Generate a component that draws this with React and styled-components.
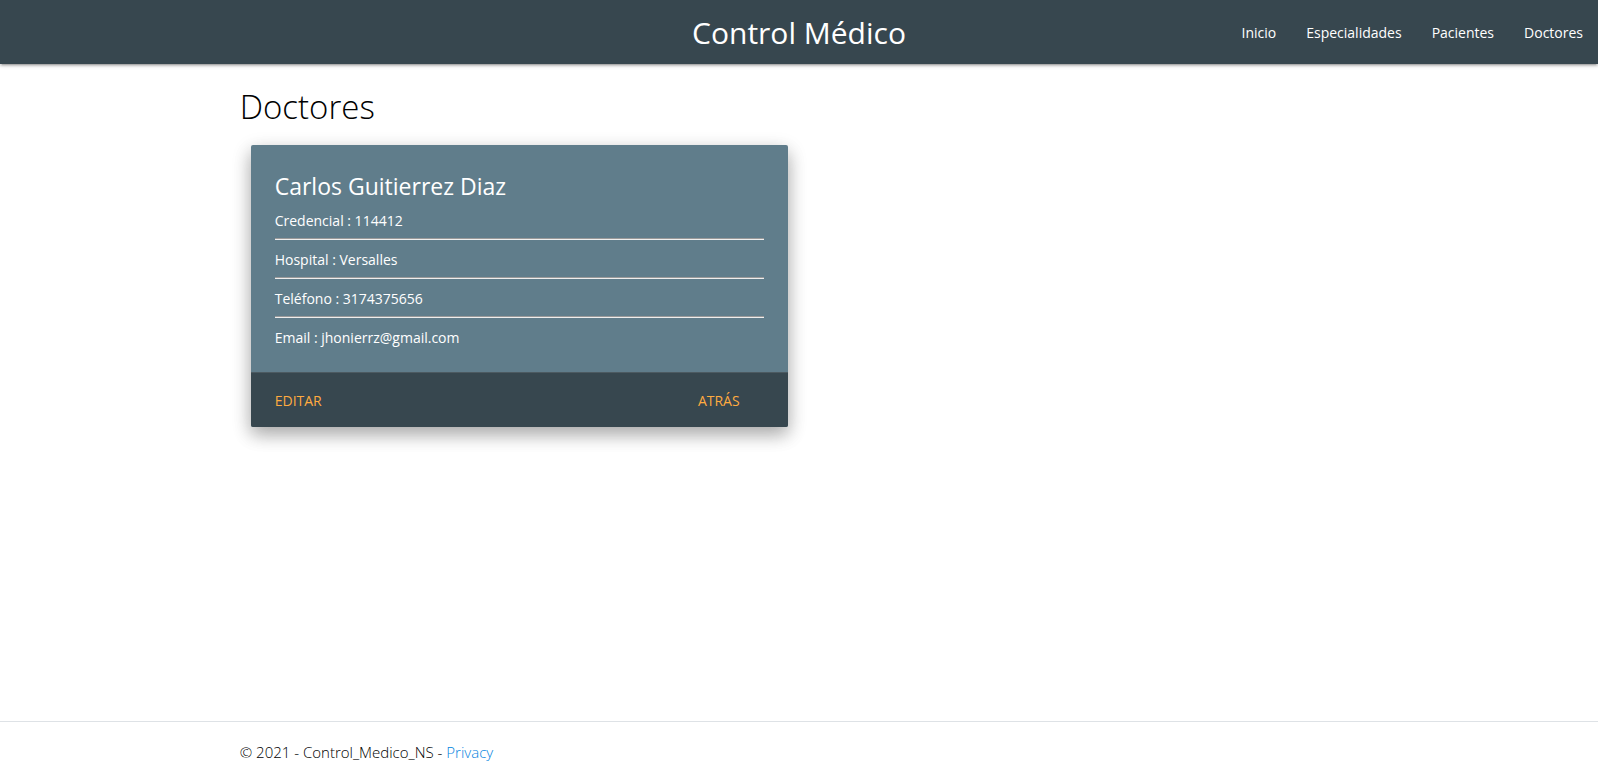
import React from "react";
import styled, { createGlobalStyle } from "styled-components";

const Global = createGlobalStyle`
  *, *::before, *::after { box-sizing: border-box; }
  html { font-family: "Open Sans", "Noto Sans", sans-serif; font-size: 14px; line-height: 23px; }
  body { margin: 0; color: #000; background: #fff; }
  a { text-decoration: none; }
`;

const Page = styled.div`
  display: flex;
  flex-direction: column;
  min-height: 100vh;
`;

const NavBar = styled.nav`
  display: grid;
  grid-template-columns: 1fr auto 1fr;
  align-items: center;
  height: 64px;
  padding-top: 2px;
  background: #37474f;
  box-shadow: 0 2px 2px 0 rgba(0, 0, 0, 0.14), 0 3px 1px -2px rgba(0, 0, 0, 0.12), 0 1px 5px 0 rgba(0, 0, 0, 0.2);
`;

const Brand = styled.a`
  grid-column: 2;
  color: #fff;
  font-size: 30px;
  line-height: 62px;
`;

const NavList = styled.ul`
  display: flex;
  justify-content: flex-end;
  margin: 0;
  padding: 0;
  list-style: none;
`;

const NavLink = styled.a`
  display: block;
  padding: 0 15px;
  color: #fff;
  line-height: 62px;
`;

const Main = styled.main`
  flex: 1;
  width: 70%;
  margin: 0 auto;
`;

const Title = styled.h1`
  margin: 24px 0 19px;
  font-size: 33px;
  font-weight: 300;
  line-height: 38px;
`;

const Card = styled.article`
  width: 48%;
  margin-left: 11px;
  border-radius: 2px;
  overflow: hidden;
  color: #fff;
  background: #607d8b;
  box-shadow: 0 8px 17px 0 rgba(0, 0, 0, 0.2), 0 6px 20px 0 rgba(0, 0, 0, 0.19);
`;

const CardContent = styled.div`
  padding: 24px 24px 23px;
`;

const CardTitle = styled.h2`
  margin: 0 0 6px;
  font-size: 23px;
  font-weight: 400;
  line-height: 34px;
`;

const Detail = styled.p`
  margin: 0;
`;

const Divider = styled.hr`
  margin: 6px 0 8px;
  border: 0;
  border-top: 1px solid #9a9a9a;
  border-bottom: 1px solid #eee;
`;

const CardActions = styled.div`
  display: flex;
  justify-content: space-between;
  padding: 16px 48px 15px 24px;
  border-top: 1px solid #4c5a61;
  background: #37474f;
`;

const ActionLink = styled.a`
  color: #ffab40;
  text-transform: uppercase;
`;

const Footer = styled.footer`
  border-top: 1px solid #dee2e6;
  line-height: 60px;
`;

const FooterText = styled.div`
  width: 70%;
  margin: 0 auto;
  font-size: 15px;
  font-weight: 300;
`;

const FooterLink = styled.a`
  color: #0284e0;
`;

const sections = ["Inicio", "Especialidades", "Pacientes", "Doctores"];

const details = [
  ["Credencial", "114412"],
  ["Hospital", "Versalles"],
  ["Teléfono", "3174375656"],
  ["Email", "jhonierrz@gmail.com"],
];

export default function App() {
  return (
    <Page>
      <Global />
      <header>
        <NavBar>
          <Brand href="#">Control Médico</Brand>
          <NavList>
            {sections.map((name) => (
              <li key={name}>
                <NavLink href={`#${name}`}>{name}</NavLink>
              </li>
            ))}
          </NavList>
        </NavBar>
      </header>
      <Main>
        <Title>Doctores</Title>
        <Card>
          <CardContent>
            <CardTitle>Carlos Guitierrez Diaz</CardTitle>
            {details.map(([label, value], index) => (
              <React.Fragment key={label}>
                {index > 0 && <Divider />}
                <Detail>{`${label} : ${value}`}</Detail>
              </React.Fragment>
            ))}
          </CardContent>
          <CardActions>
            <ActionLink href="#editar">Editar</ActionLink>
            <ActionLink href="#atras">Atrás</ActionLink>
          </CardActions>
        </Card>
      </Main>
      <Footer>
        <FooterText>
          © 2021 - Control_Medico_NS - <FooterLink href="#privacy">Privacy</FooterLink>
        </FooterText>
      </Footer>
    </Page>
  );
}
